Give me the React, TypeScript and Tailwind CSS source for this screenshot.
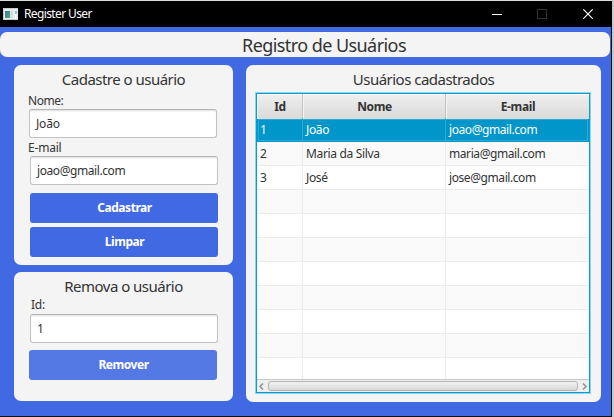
import React from "react";

function Label({ children, className = "" }: { children: React.ReactNode; className?: string }) {
  return <div className={`whitespace-nowrap text-[#333333] ${className}`}>{children}</div>;
}

function Field({ value, className = "" }: { value: string; className?: string }) {
  return (
    <div
      className={`flex h-[29px] w-[188px] items-center rounded-[3px] border border-[#c2c2c2] border-t-[#b5b5b5] bg-white pl-[6px] text-[12px] text-[#333333] shadow-[inset_0_2px_2px_-1px_#dddddd] ${className}`}
    >
      {value}
    </div>
  );
}

function Button({ children, className = "" }: { children: React.ReactNode; className?: string }) {
  return (
    <button
      className={`block h-[30px] w-[188px] rounded-[3px] pl-px text-center text-[12px] leading-[30px] font-bold tracking-[-0.45px] text-white ${className}`}
    >
      {children}
    </button>
  );
}

const users = [
  { id: "1", name: "João", email: "joao@gmail.com" },
  { id: "2", name: "Maria da Silva", email: "maria@gmail.com" },
  { id: "3", name: "José", email: "jose@gmail.com" },
];

const grid = "grid grid-cols-[46px_143px_1fr]";

function Row({ index }: { index: number }) {
  const user = users[index];
  const selected = index === 0;
  const tone = selected
    ? "h-6 bg-[#0096c9] text-white shadow-[inset_0_0_0_1px_#0096c9,inset_0_0_0_2px_#30a9d3]"
    : `${index === 10 ? "h-[21px]" : "h-6 border-b border-[#ececec]"} text-[#333333] ${index % 2 ? "bg-[#f9f9f9]" : "bg-white"}`;
  const line = selected ? "border-[#30a9d3]" : "border-[#ececec]";
  return (
    <div className={`${grid} ${tone} text-[12px] leading-[24px] whitespace-nowrap`}>
      <div className={`border-r pl-[3px] ${line}`}>{user?.id}</div>
      <div className={`border-r pl-[3px] tracking-[-0.34px] ${line}`}>{user?.name}</div>
      <div className="pl-[3px] tracking-[-0.42px]">{user?.email}</div>
    </div>
  );
}

function HeaderCell({ children, last = false }: { children: string; last?: boolean }) {
  return (
    <div
      className={`bg-linear-to-b from-[#efefef] to-[#dadada] pl-px text-center text-[12px] leading-[25px] font-bold tracking-[-0.35px] text-[#333333] shadow-[inset_0_1px_0_#ffffff,inset_1px_0_0_#f5f5f5] ${last ? "" : "border-r border-[#c2c2c2]"}`}
    >
      {children}
    </div>
  );
}

function TitleBar() {
  return (
    <div className="flex h-[27px] w-[612px] items-center border-t border-[#d7dcdc] bg-black">
      <svg width="15" height="12" viewBox="0 0 15 12" className="ml-[3px]" shapeRendering="crispEdges">
        <defs>
          <linearGradient id="appIcon" x1="0" y1="0" x2="1" y2="1">
            <stop offset="0" stopColor="#3975a8" />
            <stop offset="1" stopColor="#58ad72" />
          </linearGradient>
        </defs>
        <rect width="15" height="12" fill="#e9edf0" />
        <rect x="2" y="3" width="5" height="7" fill="url(#appIcon)" />
        <rect x="7" y="3" width="3" height="7" fill="#d0e0de" />
        <rect x="12" y="3" width="2" height="3" fill="#9dbdce" />
        <rect x="12" y="6" width="1" height="5" fill="#ffffff" />
        <path d="M0 .5h15M.5 0v12M0 11.5h15" stroke="#c8cdd0" />
      </svg>
      <div className="ml-[6px] text-[12px] leading-4 tracking-[-0.62px] text-white">Register User</div>
      <div className="ml-auto flex items-center">
        <svg width="10" height="10" viewBox="0 0 10 10" shapeRendering="crispEdges">
          <path d="M0 5.5h10" stroke="#ffffff" />
        </svg>
        <svg width="10" height="10" viewBox="0 0 10 10" className="ml-[35px]" shapeRendering="crispEdges">
          <rect x=".5" y=".5" width="9" height="9" fill="none" stroke="#333333" />
        </svg>
        <svg width="10" height="10" viewBox="0 0 10 10" className="mr-[19px] ml-[36px]">
          <path d="M.3 .3l9.4 9.4M9.7 .3L.3 9.7" stroke="#ffffff" strokeWidth="1.1" />
        </svg>
      </div>
    </div>
  );
}

export default function App() {
  return (
    <div className="h-[417px] w-[614px] overflow-hidden bg-[#c9c9c9] font-['Noto_Sans','Open_Sans',sans-serif]">
      <TitleBar />
      <div className="h-[390px] w-[612px] border-r border-b border-[#111111] bg-[#4169e1] pt-[5px]">
        <div className="h-[25px] w-[610px] rounded-[7px] bg-[#f4f4f4] pl-[38px] text-center text-[18px] leading-[26px] tracking-[-0.57px] text-[#333333]">
          Registro de Usuários
        </div>
        <div className="mt-2 flex gap-[13px] pl-[14px]">
          <div className="flex flex-col gap-[7px]">
            <section className="h-[200px] w-[219px] rounded-[7px] bg-[#f4f4f4] pt-[3px]">
              <Label className="text-center text-[15px] leading-[23px] tracking-[-0.52px]">Cadastre o usuário</Label>
              <Label className="ml-[14px] h-[17px] text-[12px] leading-[20px] tracking-[-0.45px]">Nome:</Label>
              <Field value="João" className="mt-px ml-[15px] tracking-[-0.2px]" />
              <Label className="ml-[14px] h-[17px] text-[12px] leading-[20px] tracking-[-0.2px]">E-mail</Label>
              <Field value="joao@gmail.com" className="mt-px ml-[16px] tracking-[-0.42px]" />
              <Button className="mt-[8px] ml-[16px] bg-[#4169e1]">Cadastrar</Button>
              <Button className="mt-1 ml-[16px] bg-[#4169e1]">Limpar</Button>
            </section>
            <section className="h-[129px] w-[219px] rounded-[7px] bg-[#f4f4f4] pt-[3px]">
              <Label className="text-center text-[15px] leading-[23px] tracking-[-0.52px]">Remova o usuário</Label>
              <Label className="ml-[17px] h-4 text-[12px] leading-[14px] tracking-[-0.2px]">Id:</Label>
              <Field value="1" className="ml-[16px]" />
              <Button className="mt-[7px] ml-[15px] bg-[#5479e4]">Remover</Button>
            </section>
          </div>
          <section className="h-[337px] w-[355px] rounded-[7px] bg-[#f4f4f4] pt-[3px]">
            <Label className="text-center text-[15px] leading-[23px] tracking-[-0.52px]">Usuários cadastrados</Label>
            <div className="mt-[2px] ml-[10px] h-[300px] w-[334px] overflow-hidden border border-[#039ed3] bg-white shadow-[0_0_0_1px_#8fd2ea]">
              <div className={`${grid} h-[24px]`}>
                <HeaderCell>Id</HeaderCell>
                <HeaderCell>Nome</HeaderCell>
                <HeaderCell last>E-mail</HeaderCell>
              </div>
              {Array.from({ length: 11 }, (_, i) => (
                <Row key={i} index={i} />
              ))}
              <div className="flex h-[13px] items-center border-t border-[#c8c8c8] bg-[#eeeeee]">
                <svg width="11" height="11" viewBox="0 0 11 11" fill="none" stroke="#8f8f8f" strokeWidth="1.5">
                  <path d="M6 2.5L3 5.5l3 3" />
                </svg>
                <div className="h-[10px] w-[310px] rounded-[3px] border border-[#b5b5b5] bg-linear-to-b from-[#f0f0f0] to-[#dadada]" />
                <svg width="11" height="11" viewBox="0 0 11 11" fill="none" stroke="#8f8f8f" strokeWidth="1.5">
                  <path d="M5 2.5l3 3-3 3" />
                </svg>
              </div>
            </div>
          </section>
        </div>
      </div>
    </div>
  );
}
